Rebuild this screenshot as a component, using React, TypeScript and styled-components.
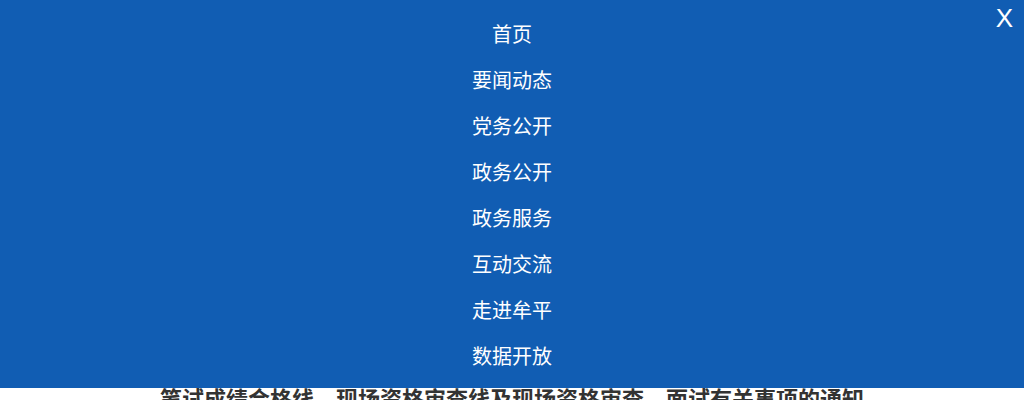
import React from "react";
import styled, { createGlobalStyle } from "styled-components";

const GlobalStyle = createGlobalStyle`
  html, body {
    margin: 0;
    padding: 0;
    background: #ffffff;
    font-family: "Liberation Sans", "Noto Sans CJK SC", sans-serif;
  }
  * {
    box-sizing: border-box;
  }
`;

const menuItems: Array<string> = [
  "首页",
  "要闻动态",
  "党务公开",
  "政务公开",
  "政务服务",
  "互动交流",
  "走进牟平",
  "数据开放",
];

const Page = styled.main`
  height: 400px;
  overflow: hidden;
  padding-top: 385px;
`;

const ArticleTitle = styled.h1`
  margin: 0;
  font-size: 22px;
  line-height: 30px;
  font-weight: 700;
  color: #333333;
  text-align: center;
`;

const MenuOverlay = styled.nav`
  position: fixed;
  top: 0;
  left: 0;
  right: 0;
  height: 388px;
  background: #115db3;
  z-index: 10;
`;

const MenuList = styled.ul`
  list-style: none;
  margin: 0;
  padding: 12px 0 0;
  display: flex;
  flex-direction: column;
  align-items: center;
`;

const MenuItem = styled.li`
  height: 46px;
  line-height: 46px;
  font-size: 20px;
  color: #ffffff;
  cursor: pointer;
`;

const CloseButton = styled.button`
  position: absolute;
  top: 2px;
  right: 11px;
  padding: 0;
  border: none;
  background: none;
  color: #ffffff;
  font-family: "Liberation Sans", sans-serif;
  font-size: 26px;
  line-height: 32px;
  cursor: pointer;
`;

export default function App() {
  return (
    <>
      <GlobalStyle />
      <Page>
        <ArticleTitle>笔试成绩合格线、现场资格审查线及现场资格审查、面试有关事项的通知</ArticleTitle>
      </Page>
      <MenuOverlay>
        <CloseButton>X</CloseButton>
        <MenuList>
          {menuItems.map((item) => (
            <MenuItem key={item}>{item}</MenuItem>
          ))}
        </MenuList>
      </MenuOverlay>
    </>
  );
}
